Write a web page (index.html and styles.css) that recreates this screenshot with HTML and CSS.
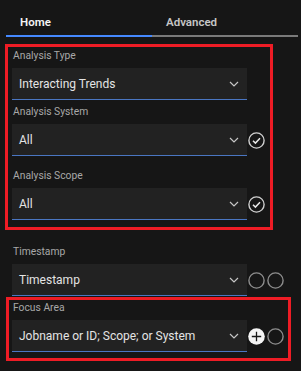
FILE: index.html
```html
<!DOCTYPE html>
<html lang="en">
<head>
    <meta charset="UTF-8">
    <meta name="viewport" content="width=device-width, initial-scale=1.0">
    <title>Analysis</title>
    <link rel="stylesheet" href="styles.css">
</head>
<body>
    <div class="panel">
        <div class="tabs">
            <div class="tab active">Home</div>
            <div class="tab">Advanced</div>
        </div>

        <div class="form">
            <div class="field first">
                <div class="label">Analysis Type</div>
                <div class="row">
                    <div class="select"><span>Interacting Trends</span>
                        <svg class="chev" width="10" height="6" viewBox="0 0 10 6"><path d="M1 1l4 4 4-4" fill="none" stroke="#c6c6c6" stroke-width="1.2"/></svg>
                    </div>
                </div>
            </div>
            <div class="field tight">
                <div class="label">Analysis System</div>
                <div class="row">
                    <div class="select"><span>All</span>
                        <svg class="chev" width="10" height="6" viewBox="0 0 10 6"><path d="M1 1l4 4 4-4" fill="none" stroke="#c6c6c6" stroke-width="1.2"/></svg>
                    </div>
                    <svg class="icon" width="17" height="17" viewBox="0 0 17 17"><circle cx="8.5" cy="8.5" r="7.6" fill="none" stroke="#d0d0d0" stroke-width="1.4"/><path d="M5 8.8l2.4 2.3 4.6-4.8" fill="none" stroke="#e8e8e8" stroke-width="1.5"/></svg>
                </div>
            </div>
            <div class="field mid">
                <div class="label">Analysis Scope</div>
                <div class="row">
                    <div class="select"><span>All</span>
                        <svg class="chev" width="10" height="6" viewBox="0 0 10 6"><path d="M1 1l4 4 4-4" fill="none" stroke="#c6c6c6" stroke-width="1.2"/></svg>
                    </div>
                    <svg class="icon" width="17" height="17" viewBox="0 0 17 17"><circle cx="8.5" cy="8.5" r="7.6" fill="none" stroke="#d0d0d0" stroke-width="1.4"/><path d="M5 8.8l2.4 2.3 4.6-4.8" fill="none" stroke="#e8e8e8" stroke-width="1.5"/></svg>
                </div>
            </div>
            <div class="field wide">
                <div class="label">Timestamp</div>
                <div class="row">
                    <div class="select"><span>Timestamp</span>
                        <svg class="chev" width="10" height="6" viewBox="0 0 10 6"><path d="M1 1l4 4 4-4" fill="none" stroke="#c6c6c6" stroke-width="1.2"/></svg>
                    </div>
                    <svg class="icon" width="17" height="17" viewBox="0 0 17 17"><circle cx="8.5" cy="8.5" r="7.6" fill="none" stroke="#8d8d8d" stroke-width="1.4"/></svg>
                    <svg class="icon" width="17" height="17" viewBox="0 0 17 17"><circle cx="8.5" cy="8.5" r="7.6" fill="none" stroke="#8d8d8d" stroke-width="1.4"/></svg>
                </div>
            </div>
            <div class="field tight">
                <div class="label">Focus Area</div>
                <div class="row">
                    <div class="select"><span>Jobname or ID; Scope; or System</span>
                        <svg class="chev" width="10" height="6" viewBox="0 0 10 6"><path d="M1 1l4 4 4-4" fill="none" stroke="#c6c6c6" stroke-width="1.2"/></svg>
                    </div>
                    <svg class="icon" width="17" height="17" viewBox="0 0 17 17"><circle cx="8.5" cy="8.5" r="8.3" fill="#f4f4f4"/><path d="M8.5 3.8v9.4M3.8 8.5h9.4" stroke="#161616" stroke-width="1.3"/></svg>
                    <svg class="icon" width="17" height="17" viewBox="0 0 17 17"><circle cx="8.5" cy="8.5" r="7.6" fill="none" stroke="#8d8d8d" stroke-width="1.4"/></svg>
                </div>
            </div>
        </div>

        <div class="mark mark-analysis"></div>
        <div class="mark mark-focus"></div>
    </div>
</body>
</html>
```

FILE: styles.css
```css
body {
    margin: 0;
    background-color: #161616;
    font-family: 'Roboto', 'Liberation Sans', sans-serif;
    color: #f4f4f4;
}
.panel {
    position: relative;
    width: 301px;
    height: 371px;
    overflow: hidden;
}
.tabs {
    display: flex;
    margin: 0 3px 0 6px;
}
.tab {
    flex: 1;
    padding: 14px 0 5px 14px;
    line-height: 16px;
    font-size: 11.5px;
    font-weight: 600;
    color: #c6c6c6;
    border-bottom: 2px solid #7a7a7a;
}
.tab.active {
    color: #f4f4f4;
    border-bottom-color: #4589ff;
}
.form {
    display: flex;
    flex-direction: column;
    padding-left: 12px;
}
.field.first { margin-top: 11px; }
.field.tight { margin-top: 4px; }
.field.mid { margin-top: 12px; }
.field.wide { margin-top: 24px; }
.label {
    font-size: 10.3px;
    line-height: 16px;
    color: #a8a8a8;
    margin-bottom: 4px;
    padding-left: 1px;
}
.row {
    display: flex;
    align-items: center;
    gap: 2px;
}
.select {
    width: 235px;
    height: 31px;
    background-color: #222222;
    border-bottom: 1px solid #4a76c2;
    display: flex;
    align-items: center;
    justify-content: space-between;
    margin-right: -1px;
}
.select span {
    padding-left: 7px;
    font-size: 12px;
    color: #e4e4e4;
}
.chev {
    margin-right: 8px;
}
.icon {
    display: block;
}
.mark {
    position: absolute;
    border: 3px solid #ee1c25;
    box-sizing: border-box;
}
.mark-analysis {
    left: 5px;
    top: 44px;
    width: 268px;
    height: 186px;
}
.mark-focus {
    left: 6px;
    top: 297px;
    width: 285px;
    height: 64px;
}
```
